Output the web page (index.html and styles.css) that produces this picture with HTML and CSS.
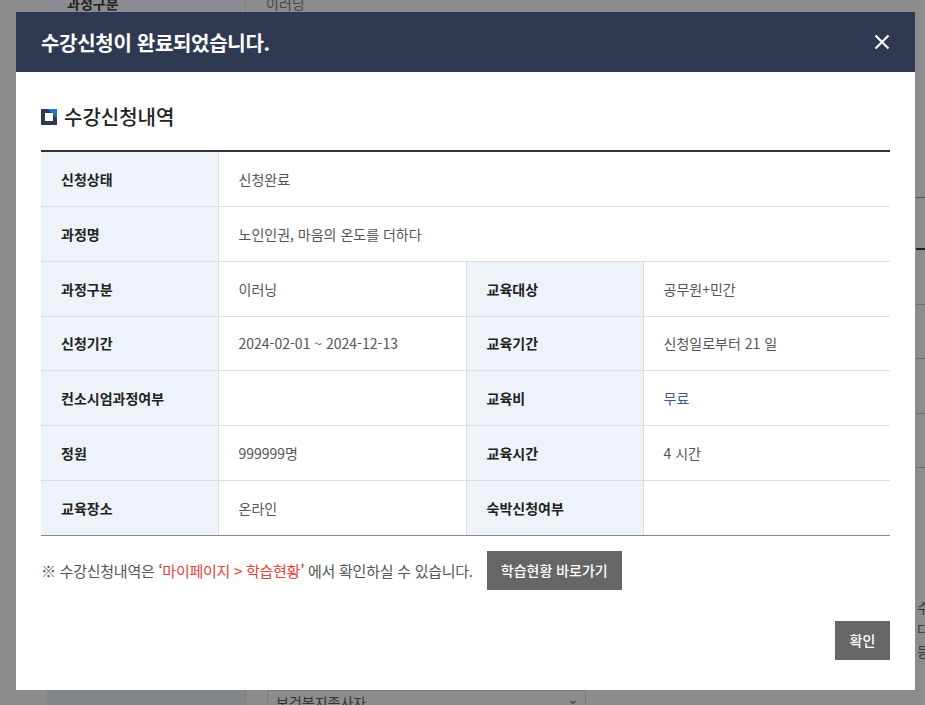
FILE: index.html
```html
<!DOCTYPE html>
<html lang="ko">
<head>
<meta charset="utf-8">
<title>수강신청 완료</title>
<link rel="stylesheet" href="styles.css">
</head>
<body>
<div class="page">
  <div class="bg-top">
    <div class="bg-th">과정구분</div>
    <div class="bg-td">이러닝</div>
  </div>
  <div class="bg-right">
    <span class="l1"></span><span class="l2"></span><span class="l3"></span><span class="l4"></span><span class="l5"></span><span class="l6"></span>
    <div class="bg-frag">수<br>다<br>등</div>
  </div>
  <div class="bg-bottom">
    <div class="bg-th2"></div>
    <div class="bg-sel">보건복지종사자<span class="chev">&#8964;</span></div>
  </div>
</div>
<div class="overlay"></div>
<div class="modal">
  <div class="modal-head">
    <h1 class="modal-title">수강신청이 완료되었습니다.</h1>
    <button class="close" aria-label="닫기">
      <svg width="16" height="16" viewBox="0 0 16 16"><path d="M1.5 1.5 L14.5 14.5 M14.5 1.5 L1.5 14.5" stroke="#fff" stroke-width="2.2" fill="none"/></svg>
    </button>
  </div>
  <div class="modal-body">
    <h2 class="sec-title"><span class="sec-icon"><span class="sec-icon-in"></span></span>수강신청내역</h2>
    <table class="info">
      <colgroup><col class="c1"><col class="c2"><col class="c3"><col class="c4"></colgroup>
      <tr><th>신청상태</th><td colspan="3">신청완료</td></tr>
      <tr><th>과정명</th><td colspan="3">노인인권, 마음의 온도를 더하다</td></tr>
      <tr><th>과정구분</th><td>이러닝</td><th>교육대상</th><td>공무원+민간</td></tr>
      <tr class="short"><th>신청기간</th><td>2024-02-01 ~ 2024-12-13</td><th>교육기간</th><td>신청일로부터 21 일</td></tr>
      <tr><th>컨소시엄과정여부</th><td></td><th>교육비</th><td class="blue">무료</td></tr>
      <tr><th>정원</th><td>999999명</td><th>교육시간</th><td>4 시간</td></tr>
      <tr class="last"><th>교육장소</th><td>온라인</td><th>숙박신청여부</th><td></td></tr>
    </table>
    <div class="notice">
      <p class="notice-text">※ 수강신청내역은 <span class="q">‘</span><span class="hl">마이페이지 &gt; 학습현황</span><span class="q">’</span> 에서 확인하실 수 있습니다.</p>
      <button class="btn-go">학습현황 바로가기</button>
    </div>
    <div class="foot">
      <button class="btn-ok">확인</button>
    </div>
  </div>
</div>
</body>
</html>
```

FILE: styles.css
```css
* { box-sizing: border-box; }
html, body { margin: 0; padding: 0; }
body {
  width: 925px;
  height: 705px;
  overflow: hidden;
  background: #8c8c8c;
  font-family: "Noto Sans CJK KR", "Noto Sans", sans-serif;
  position: relative;
}
.page { position: absolute; inset: 0; }
.bg-top { display: flex; height: 12px; overflow: hidden; }
.bg-th {
  width: 200px; margin-left: 46px; background: #898c90;
  border-right: 1px solid #7f7f7f;
  font-size: 14px; font-weight: 700; color: #222; padding-left: 21px; line-height: 14px; margin-top: -4px;
}
.bg-td { padding-left: 20px; font-size: 14px; color: #444; line-height: 14px; margin-top: -4px; }
.bg-right { position: absolute; left: 916px; top: 0; width: 9px; height: 705px; overflow: hidden; }
.bg-right span { position: absolute; left: 0; width: 9px; height: 1px; background: #6e6e6e; }
.bg-right .l1 { top: 197px; background: #555; }
.bg-right .l2 { top: 248px; height: 2px; background: #1f1f1f; }
.bg-right .l3 { top: 304px; }
.bg-right .l4 { top: 358px; }
.bg-right .l5 { top: 413px; }
.bg-right .l6 { top: 467px; }
.bg-frag { position: absolute; left: 1px; top: 596px; font-size: 14px; line-height: 22px; color: #3a3a3a; }
.bg-bottom { position: absolute; left: 0; top: 690px; width: 925px; height: 15px; display: flex; overflow: hidden; }
.bg-th2 { width: 200px; margin-left: 46px; background: #84878b; border-right: 1px solid #7f7f7f; }
.bg-sel {
  margin-left: 21px; width: 319px; border: 1px solid #7a7a7a; border-bottom: 0;
  font-size: 14px; color: #333; padding-left: 8px; line-height: 22px; position: relative;
}
.chev { position: absolute; right: 6px; top: -4px; font-size: 14px; color: #444; }
.overlay { position: absolute; inset: 0; }

.modal {
  position: absolute;
  left: 16px; top: 12px;
  width: 899px; height: 678px;
  background: #fff;
}
.modal-head {
  height: 60px;
  background: #2f3a52;
  display: flex; align-items: center; justify-content: space-between;
  padding: 0 25px;
}
.modal-title {
  margin: 0; color: #fff; font-size: 20px; font-weight: 700; letter-spacing: -0.3px;
}
.close {
  background: none; border: 0; padding: 0; width: 16px; height: 16px;
  display: flex;
}
.modal-body { padding: 32px 25px 30px; }
.sec-title {
  margin: 0 0 20px; display: flex; align-items: center; gap: 7px;
  font-size: 20px; font-weight: 500; color: #222; line-height: 26px; height: 26px;
}
.sec-icon {
  width: 16px; height: 16px; position: relative;
  display: inline-block; flex: none;
  background: linear-gradient(225deg, #1e78c8 0 30%, #2f3a52 30%);
}
.sec-icon-in {
  position: absolute; left: 4px; top: 4px; width: 8px; height: 8px; background: #fff;
}
.info {
  width: 849px; border-collapse: collapse; border-top: 2px solid #333;
  table-layout: fixed;
}
.c1 { width: 177px; } .c2 { width: 248px; } .c3 { width: 177px; } .c4 { width: 247px; }
.info th, .info td {
  height: 55px; border-bottom: 1px solid #ddd; font-size: 14px; text-align: left; padding: 0 0 0 20px;
}
.info tr.short th, .info tr.short td { height: 54px; }
.info th { background: #eef3fa; color: #222; font-weight: 700; border-right: 1px solid #ddd; }
.info td { color: #555; font-weight: 400; border-right: 1px solid #ddd; }
.info td:last-child { border-right: 0; }
.info td.blue { color: #3c5a8a; }
.info tr.last th, .info tr.last td { border-bottom: 1px solid #888; }
.notice { display: flex; align-items: center; gap: 14px; margin-top: 15px; }
.notice-text { margin: 0; font-size: 15px; color: #555; letter-spacing: -0.26px; }
.q { color: #a0302a; }
.hl { color: #e0443a; }
.btn-go {
  width: 135px; height: 39px; background: #666; color: #fff; border: 0;
  font-family: inherit; font-size: 14px; font-weight: 500; padding: 0;
}
.foot { display: flex; justify-content: flex-end; margin-top: 31px; }
.btn-ok {
  width: 55px; height: 39px; background: #666; color: #fff; border: 0;
  font-family: inherit; font-size: 14px; font-weight: 500; padding: 0;
}
```
